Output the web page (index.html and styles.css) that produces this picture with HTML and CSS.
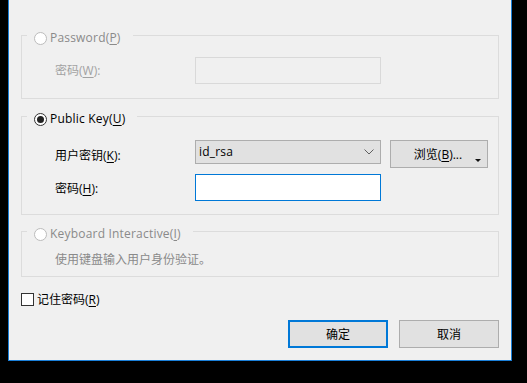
FILE: index.html
```html
<!DOCTYPE html>
<html lang="zh-CN">
<head>
<meta charset="utf-8">
<title>SSH 认证</title>
<link rel="stylesheet" href="styles.css">
</head>
<body>
<div class="dialog">
  <fieldset class="group">
    <legend class="legend disabled">
      <span class="radio radio-disabled"></span>
      <span>Password(<u>P</u>)</span>
    </legend>
    <div class="row row-first-pw">
      <span class="label label-disabled">密码(<u>W</u>):</span>
      <span class="input input-disabled"></span>
    </div>
  </fieldset>

  <fieldset class="group group-pk">
    <legend class="legend">
      <span class="radio radio-checked"><span class="dot"></span></span>
      <span>Public Key(<u>U</u>)</span>
    </legend>
    <div class="row row-key">
      <span class="label label-low">用户密钥(<u>K</u>):</span>
      <span class="combo">
        <span class="combo-text">id_rsa</span>
        <svg class="chev" width="10" height="6" viewBox="0 0 10 6"><polyline points="0.5,0.5 5,5 9.5,0.5" fill="none" stroke="#606060" stroke-width="1"/></svg>
      </span>
      <span class="button browse">浏览(<u>B</u>)...<span class="drop"></span></span>
    </div>
    <div class="row row-pass">
      <span class="label label-low">密码(<u>H</u>):</span>
      <span class="input input-focus"></span>
    </div>
  </fieldset>

  <fieldset class="group group-kb">
    <legend class="legend disabled">
      <span class="radio radio-disabled"></span>
      <span>Keyboard Interactive(<u>I</u>)</span>
    </legend>
    <div class="desc disabled">使用键盘输入用户身份验证。</div>
  </fieldset>

  <div class="check-row">
    <span class="checkbox"></span>
    <span>记住密码(<u>R</u>)</span>
  </div>

  <div class="actions">
    <span class="button btn-default">确定</span>
    <span class="button">取消</span>
  </div>
</div>
</body>
</html>
```

FILE: styles.css
```css
html, body {
  margin: 0;
  padding: 0;
  background: #000;
}
body {
  width: 527px;
  height: 383px;
  overflow: hidden;
  font-family: "Open Sans", "Noto Sans CJK SC", sans-serif;
  font-size: 12px;
  color: #000;
}
u {
  text-decoration: underline;
  text-underline-offset: 2px;
}
.dialog {
  margin-left: 8px;
  width: 478px;
  height: 336px;
  padding: 24px 12px 0 12px;
  box-sizing: content-box;
  background: #f0f0f0;
  border-left: 1px solid #1a7fd8;
  border-right: 1px solid #1a7fd8;
  border-bottom: 1px solid #1a7fd8;
}
.group {
  margin: 0;
  padding: 0 0 14px 5px;
  border: 1px solid #dcdcdc;
  min-width: 0;
}
.group-pk {
  margin-top: 6px;
  padding-bottom: 13px;
}
.group-kb {
  margin-top: 5px;
  padding-bottom: 8px;
}
.legend {
  display: flex;
  align-items: center;
  gap: 3px;
  padding: 6px 12px 0 7px;
  line-height: 16px;
  height: 16px;
  box-sizing: content-box;
  letter-spacing: 0.2px;
}
.disabled {
  color: #8a8a8a;
}
.radio {
  width: 11px;
  height: 11px;
  border: 1px solid #333;
  border-radius: 50%;
  background: #fff;
  display: inline-flex;
  align-items: center;
  justify-content: center;
  flex: none;
}
.radio-disabled {
  border-color: #bcbcbc;
}
.dot {
  width: 7px;
  height: 7px;
  border-radius: 50%;
  background: #222;
}
.row {
  display: grid;
  grid-template-columns: 140px 186px auto;
  align-items: center;
  margin-left: 28px;
}
.row-first-pw {
  margin-top: 11px;
}
.row-key {
  margin-top: 13px;
}
.row-pass {
  margin-top: 6px;
}
.label {
  line-height: 16px;
}
.label-low {
  padding-top: 3px;
}
.label-disabled {
  color: #a2a2a2;
}
.input {
  height: 27px;
  box-sizing: border-box;
  border: 1px solid #7a7a7a;
  background: #fff;
}
.input-disabled {
  border-color: #d9d9d9;
  background: #f0f0f0;
}
.input-focus {
  border-color: #0078d7;
}
.combo {
  align-self: start;
  height: 24px;
  box-sizing: border-box;
  border: 1px solid #adadad;
  background: #e1e1e1;
  display: flex;
  align-items: center;
  justify-content: space-between;
  padding: 0 6px 0 3px;
}
.combo-text {
  font-size: 12px;
  line-height: 16px;
  letter-spacing: 0.2px;
}
.chev {
  display: block;
  margin-top: -1px;
}
.button {
  height: 28px;
  box-sizing: border-box;
  border: 1px solid #adadad;
  background: #e1e1e1;
  display: flex;
  align-items: center;
  justify-content: center;
  position: relative;
  width: 100px;
}
.browse {
  width: 98px;
  margin-left: 9px;
  padding-right: 2px;
}
.drop {
  position: absolute;
  right: 6px;
  top: 18px;
  width: 0;
  height: 0;
  border-left: 3px solid transparent;
  border-right: 3px solid transparent;
  border-top: 3px solid #111;
}
.desc {
  margin-top: 10px;
  margin-left: 28px;
  line-height: 16px;
}
.check-row {
  margin-top: 16px;
  display: flex;
  align-items: center;
  gap: 3px;
  height: 13px;
  line-height: 16px;
}
.checkbox {
  width: 13px;
  height: 13px;
  box-sizing: border-box;
  border: 1px solid #333;
  background: #fff;
  flex: none;
}
.actions {
  margin-top: 14px;
  display: flex;
  justify-content: flex-end;
  gap: 11px;
}
.btn-default {
  border: 2px solid #0078d7;
}
```
